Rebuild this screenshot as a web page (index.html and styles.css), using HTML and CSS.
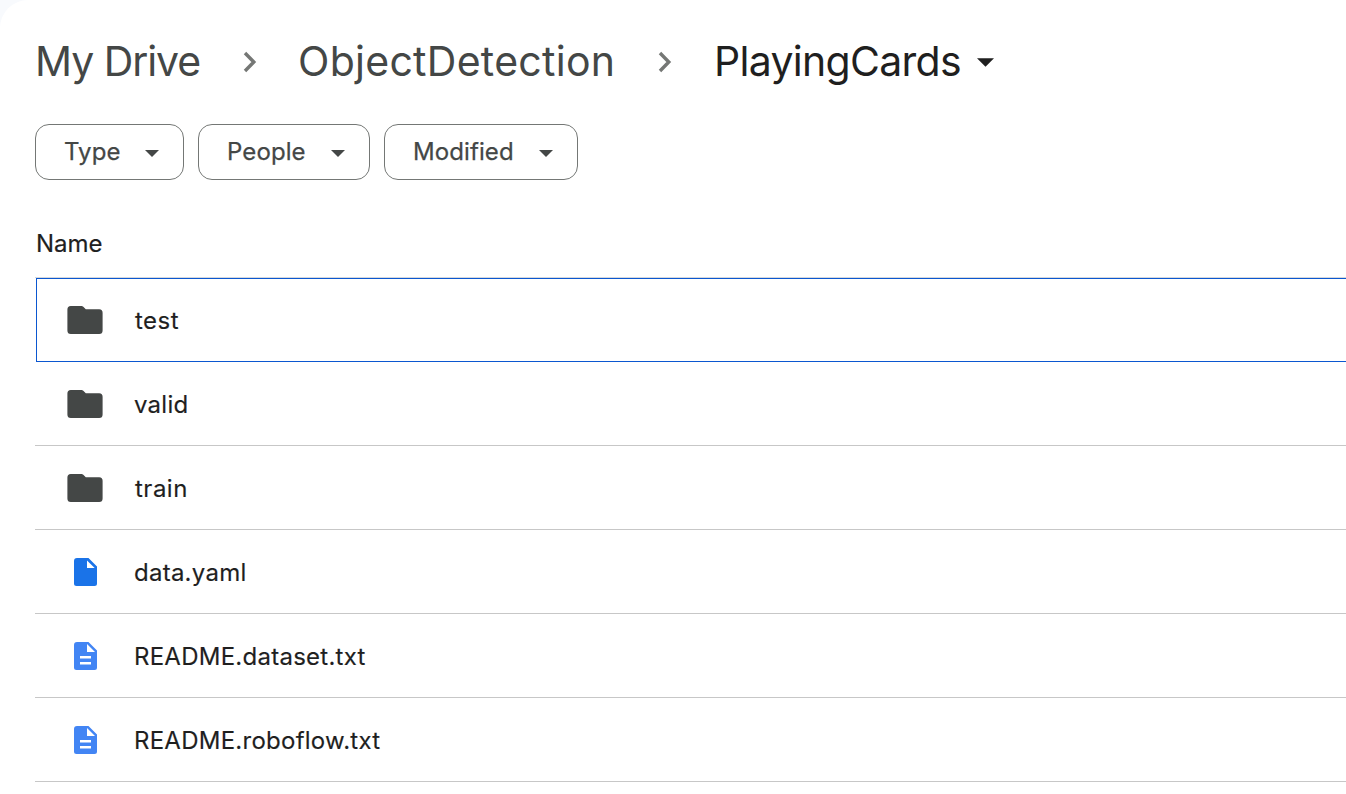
FILE: index.html
```html
<!DOCTYPE html>
<html lang="en">
<head>
<meta charset="utf-8">
<title>PlayingCards - My Drive</title>
<link rel="stylesheet" href="styles.css">
</head>
<body>
<svg class="defs" width="0" height="0" aria-hidden="true">
  <symbol id="chevron" viewBox="0 0 14 22"><path d="M2 2 10.8 11 2 20" fill="none" stroke="currentColor" stroke-width="3.4"/></symbol>
  <symbol id="caret" viewBox="0 0 16 8"><path d="M0 0h16L8 8z" fill="currentColor"/></symbol>
  <symbol id="folder" viewBox="0 0 36 28"><path d="M3.8 0H14.5q1 0 1.8.8L18.8 3.3H32.2Q35.6 3.3 35.6 6.8V24.5Q35.6 28 32.2 28H3.8Q.4 28 .4 24.5V3.5Q.4 0 3.8 0z" fill="currentColor"/></symbol>
  <symbol id="file" viewBox="0 0 23 28"><path fill-rule="evenodd" d="M3 0H14.5L23 8.5V25.5Q23 28 20.5 28H2.5Q0 28 0 25.5V3Q0 0 3 0zM13 2.5V10H20.7z" fill="currentColor"/></symbol>
  <symbol id="doc" viewBox="0 0 23 28"><path fill-rule="evenodd" d="M3 0H14.5L23 8.5V25.5Q23 28 20.5 28H2.5Q0 28 0 25.5V3Q0 0 3 0zM13 2V10H21zM6 14V16.6H17V14zM6 20V22.6H17V20z" fill="currentColor"/></symbol>
</svg>
<main class="panel">
  <nav class="crumbs">
    <span class="crumb crumb-root">My Drive</span>
    <svg class="chevron"><use href="#chevron"/></svg>
    <span class="crumb crumb-parent">ObjectDetection</span>
    <svg class="chevron"><use href="#chevron"/></svg>
    <span class="crumb crumb-current">PlayingCards</span>
    <svg class="crumb-caret"><use href="#caret"/></svg>
  </nav>
  <div class="filters">
    <button class="chip chip-type"><span>Type</span><svg class="caret"><use href="#caret"/></svg></button>
    <button class="chip chip-people"><span>People</span><svg class="caret"><use href="#caret"/></svg></button>
    <button class="chip chip-modified"><span>Modified</span><svg class="caret"><use href="#caret"/></svg></button>
  </div>
  <div class="list-head">Name</div>
  <div class="list">
    <div class="row selected"><svg class="icon folder"><use href="#folder"/></svg><span class="name short">test</span></div>
    <div class="row"><svg class="icon folder"><use href="#folder"/></svg><span class="name">valid</span></div>
    <div class="row"><svg class="icon folder"><use href="#folder"/></svg><span class="name short">train</span></div>
    <div class="row"><svg class="icon file"><use href="#file"/></svg><span class="name">data.yaml</span></div>
    <div class="row"><svg class="icon doc"><use href="#doc"/></svg><span class="name">README.dataset.txt</span></div>
    <div class="row"><svg class="icon doc"><use href="#doc"/></svg><span class="name">README.roboflow.txt</span></div>
  </div>
</main>
</body>
</html>
```
FILE: styles.css
```css
* { box-sizing: border-box; }
body {
  margin: 0;
  height: 794px;
  overflow: hidden;
  background: #f8fafd;
  font-family: Inter, "Open Sans", sans-serif;
  color: #1f1f1f;
}
.defs { display: block; }
svg { flex: none; }
.panel {
  height: 794px;
  padding: 32px 0 0 35px;
  background: #fff;
  border-top-left-radius: 28px;
}
.crumbs {
  display: flex;
  align-items: center;
  height: 60px;
  font-size: 41px;
  font-weight: 400;
  color: #444746;
  white-space: nowrap;
}
.crumb { flex: none; padding-bottom: 2px; }
.crumb-root { width: 208px; letter-spacing: -1.05px; }
.crumb-parent { width: 360px; margin-left: 41px; letter-spacing: 0.28px; }
.crumb-current { width: 246px; margin-left: 42px; letter-spacing: -0.7px; color: #1f1f1f; }
.chevron { width: 14px; height: 22px; margin-top: -1px; color: #757775; }
.crumb-caret { width: 17px; height: 9px; margin-left: 17px; color: #1f1f1f; }
.filters {
  display: flex;
  gap: 14px;
  margin-top: 32px;
}
.chip {
  display: flex;
  align-items: center;
  justify-content: space-between;
  height: 56px;
  padding: 0 24px 0 28px;
  border: 1px solid #747775;
  border-radius: 14px;
  background: #fff;
  font: 400 24px Inter, "Open Sans", sans-serif;
  letter-spacing: 0.1px;
  color: #444746;
  -webkit-text-stroke: 0.25px #444746;
}
.chip span { padding-bottom: 2px; }
.chip-type { width: 149px; }
.chip-people { width: 172px; }
.chip-modified { width: 194px; }
.caret { width: 14px; height: 7px; margin-top: 3px; }
.list-head {
  height: 97px;
  padding: 49px 0 0 1px;
  font-size: 24px;
  line-height: 30px;
  -webkit-text-stroke: 0.2px #1f1f1f;
}
.list { border-top: 1px solid #d5d8dc; }
.row {
  display: flex;
  align-items: center;
  height: 84px;
  padding-left: 32px;
  border-bottom: 1px solid #c7c7c7;
  font-size: 24px;
}
.name { padding-top: 1px; letter-spacing: 0.25px; -webkit-text-stroke: 0.15px #1f1f1f; }
.row:not(.selected) .name { padding-top: 2px; }
.short { margin-left: 1px; letter-spacing: 0.5px; }
.selected {
  margin-left: 1px;
  padding-left: 30px;
  border: 1px solid #0b57d0;
  border-right: 0;
}
.icon { width: 36px; height: 28px; margin-right: 31px; }
.folder { color: #444746; }
.file, .doc { width: 23px; margin: 0 37px 0 7px; }
.file { color: #1a73e8; }
.doc { color: #4285f4; }
```
